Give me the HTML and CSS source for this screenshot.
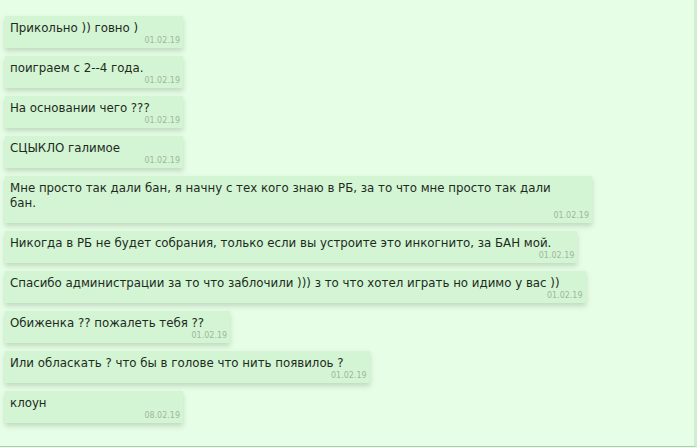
FILE: index.html
```html
<!DOCTYPE html>
<html lang="ru">
<head>
    <meta charset="UTF-8">
    <title>Сообщения</title>
    <link rel="stylesheet" href="styles.css">
</head>
<body>
    <div class="chat">
        <div class="msg"><div class="msg-text">Прикольно )) говно )</div><div class="msg-date">01.02.19</div></div>
        <div class="msg"><div class="msg-text">поиграем с 2--4 года.</div><div class="msg-date">01.02.19</div></div>
        <div class="msg"><div class="msg-text">На основании чего ???</div><div class="msg-date">01.02.19</div></div>
        <div class="msg"><div class="msg-text">СЦЫКЛО галимое</div><div class="msg-date">01.02.19</div></div>
        <div class="msg"><div class="msg-text">Мне просто так дали бан, я начну с тех кого знаю в РБ, за то что мне просто так дали бан.</div><div class="msg-date">01.02.19</div></div>
        <div class="msg"><div class="msg-text">Никогда в РБ не будет собрания, только если вы устроите это инкогнито, за БАН мой.</div><div class="msg-date">01.02.19</div></div>
        <div class="msg"><div class="msg-text">Спасибо администрации за то что заблочили ))) з то что хотел играть но идимо у вас ))</div><div class="msg-date">01.02.19</div></div>
        <div class="msg"><div class="msg-text">Обиженка ?? пожалеть тебя ??</div><div class="msg-date">01.02.19</div></div>
        <div class="msg"><div class="msg-text">Или обласкать ? что бы в голове что нить появилоь ?</div><div class="msg-date">01.02.19</div></div>
        <div class="msg"><div class="msg-text">клоун</div><div class="msg-date">08.02.19</div></div>
    </div>
</body>
</html>
```

FILE: styles.css
```css
* {
    margin: 0;
    padding: 0;
    box-sizing: border-box;
}

body {
    font-family: 'DejaVu Sans', Verdana, sans-serif;
    background: #e6fde6;
    width: 697px;
    height: 448px;
    overflow: hidden;
}

.chat {
    height: 447px;
    border-right: 3px solid #d0efd0;
    border-bottom: 1px solid #b8c4b8;
    padding: 16px 0 0 5px;
    display: flex;
    flex-direction: column;
    align-items: flex-start;
    gap: 8px;
}

.msg {
    background: #d3f5d3;
    min-width: 178px;
    max-width: 587px;
    padding: 5px 3px 2px 5px;
    box-shadow: 0 3px 5px rgba(80, 110, 80, 0.25);
}

.msg-text {
    color: #1e2a1e;
    font-size: 11.8px;
    line-height: 15px;
    padding-right: 23px;
}

.msg-date {
    color: #9fb59f;
    font-size: 8px;
    line-height: 10px;
    text-align: right;
}
```
